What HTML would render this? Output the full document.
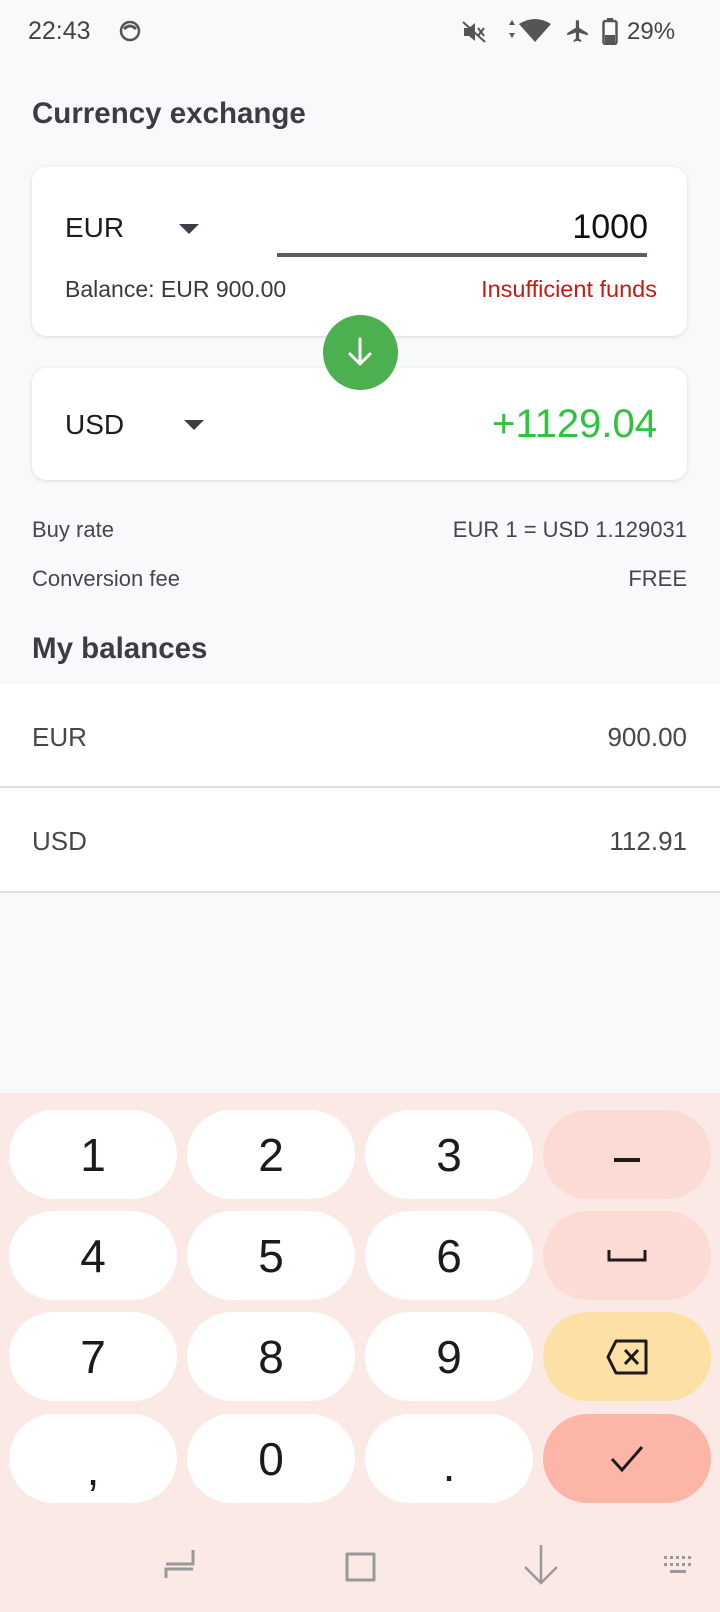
<!DOCTYPE html>
<html><head><meta charset="utf-8"><style>
*{margin:0;padding:0;box-sizing:border-box}
body{width:720px;height:1612px;background:#f8f9fb;font-family:"Liberation Sans",Arial,sans-serif;position:relative;overflow:hidden;color:#222}
.a{position:absolute;white-space:nowrap;line-height:1}
.card{position:absolute;left:32px;width:655px;background:#fff;border-radius:14px;box-shadow:0 1px 4px rgba(0,0,0,0.13)}
.tri{position:absolute;width:0;height:0;border-left:10px solid transparent;border-right:10px solid transparent;border-top:10px solid #3f3d46}
.key{position:absolute;width:168px;height:89px;border-radius:45px;background:#fff;display:flex;align-items:center;justify-content:center;font-size:46px;color:#1f1a1a}
.sub{color:#47464d;font-size:22px}
</style></head><body>
<!-- status bar -->
<div class="a" style="left:28px;top:19px;font-size:25px;color:#444">22:43</div>
<svg class="a" style="left:119px;top:20px" width="22" height="22" viewBox="0 0 22 22"><circle cx="11" cy="11" r="9" fill="none" stroke="#555" stroke-width="2.5"/><path d="M5 9 Q11 3 17 9" stroke="#555" stroke-width="3" fill="none"/></svg>
<svg class="a" style="left:461px;top:20px" width="26" height="24" viewBox="0 0 26 24"><path d="M3 8h5l6-5v18l-6-5H3z" fill="#555"/><path d="M17 8l6 8M23 8l-6 8" stroke="#555" stroke-width="2"/><path d="M2 2l22 20" stroke="#555" stroke-width="2"/></svg>
<svg class="a" style="left:509px;top:18px" width="46" height="26" viewBox="0 0 46 26"><path d="M3 2l3 5H0zM3 20l3-5H0z" fill="#555"/><path d="M10 6 Q26 -4 42 6 L26 24z" fill="#555"/></svg>
<svg class="a" style="left:565px;top:18px" width="26" height="26" viewBox="0 0 24 24"><path d="M21 16v-2l-8-5V3.5a1.5 1.5 0 0 0-3 0V9l-8 5v2l8-2.5V19l-2 1.5V22l3.5-1 3.5 1v-1.5L13 19v-5.5z" fill="#555"/></svg>
<svg class="a" style="left:602px;top:18px" width="16" height="27" viewBox="0 0 16 27"><rect x="5" y="0" width="6" height="3" fill="#555"/><rect x="1.5" y="3" width="13" height="23" rx="2" fill="none" stroke="#555" stroke-width="2.5"/><rect x="3" y="17" width="10" height="8" fill="#555"/></svg>
<div class="a" style="left:627px;top:20px;font-size:24px;color:#444">29%</div>

<div class="a" style="left:32px;top:99px;font-size:29.5px;font-weight:bold;color:#3d3c44">Currency exchange</div>

<div class="card" style="top:167px;height:169px"></div>
<div class="a" style="left:65px;top:214px;font-size:28px;color:#1d1c22">EUR</div>
<div class="tri" style="left:179px;top:224px"></div>
<div class="a" style="left:447px;width:201px;text-align:right;top:210px;font-size:34px;color:#111">1000</div>
<div class="a" style="left:277px;top:253px;width:370px;height:4px;background:#5e5a6a"></div>
<div class="a sub" style="left:65px;top:278px;font-size:23px;color:#3a393f">Balance: EUR 900.00</div>
<div class="a" style="left:400px;width:257px;text-align:right;top:278px;font-size:23.5px;color:#c51a12">Insufficient funds</div>

<div class="card" style="top:368px;height:112px"></div>
<div class="a" style="left:65px;top:411px;font-size:28px;color:#1d1c22">USD</div>
<div class="tri" style="left:184px;top:420px"></div>
<div class="a" style="left:380px;width:277px;text-align:right;top:404px;font-size:40px;color:#2ec43b">+1129.04</div>

<div class="a" style="left:323px;top:315px;width:75px;height:75px;border-radius:50%;background:#4caf50"></div>
<svg class="a" style="left:340px;top:332px" width="40" height="40" viewBox="0 0 40 40"><path d="M20 7v25M10 22l10 10 10-10" stroke="#fff" stroke-width="3" fill="none" stroke-linecap="round" stroke-linejoin="round"/></svg>

<div class="a sub" style="left:32px;top:519px">Buy rate</div>
<div class="a sub" style="left:380px;width:307px;text-align:right;top:519px">EUR 1 = USD 1.129031</div>
<div class="a sub" style="left:32px;top:568px">Conversion fee</div>
<div class="a sub" style="left:500px;width:187px;text-align:right;top:568px">FREE</div>
<div class="a" style="left:32px;top:634px;font-size:29.5px;font-weight:bold;color:#3d3c44">My balances</div>

<div class="a" style="left:0;top:684px;width:720px;height:209px;background:#fff"></div>
<div class="a" style="left:0;top:786px;width:720px;height:2px;background:#e0e0e0"></div>
<div class="a" style="left:0;top:891px;width:720px;height:2px;background:#e0e0e0"></div>
<div class="a" style="left:32px;top:724px;font-size:26px;color:#47464d">EUR</div>
<div class="a" style="left:500px;width:187px;text-align:right;top:724px;font-size:26px;color:#47464d">900.00</div>
<div class="a" style="left:32px;top:828px;font-size:26px;color:#47464d">USD</div>
<div class="a" style="left:500px;width:187px;text-align:right;top:828px;font-size:26px;color:#47464d">112.91</div>

<!-- keyboard -->
<div class="a" style="left:0;top:1093px;width:720px;height:519px;background:#fbe9e6"></div>
<div class="key" style="left:9px;top:1110px">1</div>
<div class="key" style="left:187px;top:1110px">2</div>
<div class="key" style="left:365px;top:1110px">3</div>
<div class="key" style="left:543px;top:1110px;background:#fddbd5"><div style="width:26px;height:4px;background:#1f1a1a;margin-top:10px"></div></div>
<div class="key" style="left:9px;top:1211px">4</div>
<div class="key" style="left:187px;top:1211px">5</div>
<div class="key" style="left:365px;top:1211px">6</div>
<div class="key" style="left:543px;top:1211px;background:#fddbd5"><svg width="40" height="20" viewBox="0 0 40 20"><path d="M2 4v10h36V4" stroke="#1f1a1a" stroke-width="3" fill="none"/></svg></div>
<div class="key" style="left:9px;top:1312px">7</div>
<div class="key" style="left:187px;top:1312px">8</div>
<div class="key" style="left:365px;top:1312px">9</div>
<div class="key" style="left:543px;top:1312px;background:#fce0a6"><svg width="46" height="36" viewBox="0 0 46 36"><path d="M12 2h30v32H12L4 18z" stroke="#1f1a1a" stroke-width="3" fill="none" stroke-linejoin="round"/><path d="M21 11l13 14M34 11L21 25" stroke="#1f1a1a" stroke-width="3"/></svg></div>
<div class="key" style="left:9px;top:1414px"><span style="position:relative;top:10px">,</span></div>
<div class="key" style="left:187px;top:1414px">0</div>
<div class="key" style="left:365px;top:1414px"><span style="position:relative;top:6px">.</span></div>
<div class="key" style="left:543px;top:1414px;background:#fdb5a8"><svg width="36" height="30" viewBox="0 0 36 30"><path d="M3 15l10 11L33 3" stroke="#1f1a1a" stroke-width="3" fill="none"/></svg></div>

<!-- nav -->
<svg class="a" style="left:163px;top:1548px" width="34" height="34" viewBox="0 0 34 34"><path d="M30 2v14H3M3 30V21h27" stroke="#999" stroke-width="3" fill="none"/></svg>
<svg class="a" style="left:343px;top:1548px" width="34" height="34" viewBox="0 0 34 34"><path d="M4 6h27v26H4z" stroke="#999" stroke-width="3" fill="none" stroke-linejoin="round"/></svg>
<svg class="a" style="left:523px;top:1543px" width="36" height="42" viewBox="0 0 36 42"><path d="M18 2v38M2 24l16 16 16-16" stroke="#999" stroke-width="2.5" fill="none"/></svg>
<svg class="a" style="left:664px;top:1554px" width="32" height="24" viewBox="0 0 32 24"><g fill="#999"><rect x="0" y="2" width="3" height="3"/><rect x="6" y="2" width="3" height="3"/><rect x="12" y="2" width="3" height="3"/><rect x="18" y="2" width="3" height="3"/><rect x="24" y="2" width="3" height="3"/><rect x="0" y="9" width="3" height="3"/><rect x="6" y="9" width="3" height="3"/><rect x="12" y="9" width="3" height="3"/><rect x="18" y="9" width="3" height="3"/><rect x="24" y="9" width="3" height="3"/><rect x="6" y="16" width="16" height="3"/></g></svg>
</body></html>
